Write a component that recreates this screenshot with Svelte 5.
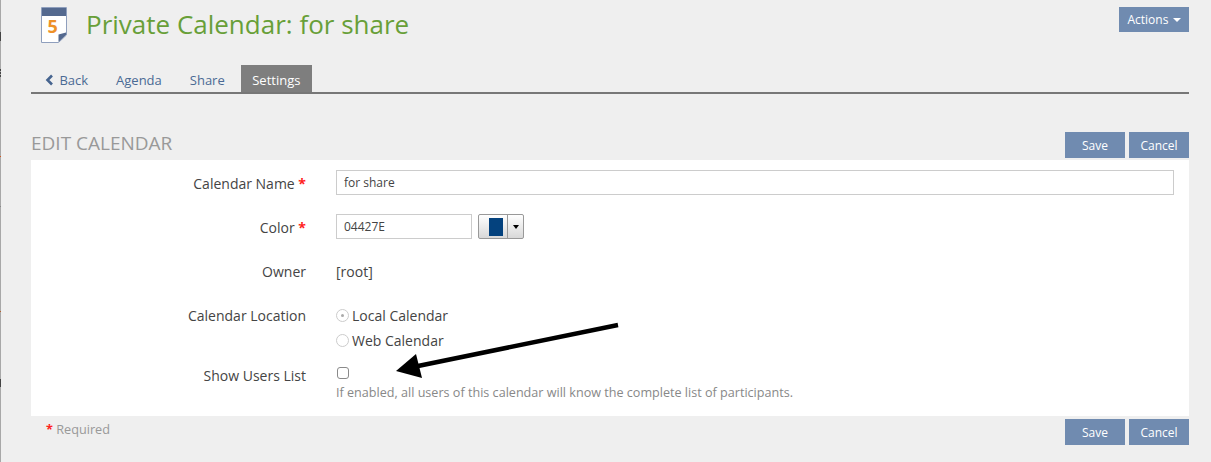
<script>
  const tabs = ['Agenda', 'Share'];
  const ticks = [
    { y: 32, h: 9, c: '#444' },
    { y: 69, h: 2, c: '#444' },
    { y: 72, h: 2, c: '#444' },
    { y: 75, h: 2, c: '#444' },
    { y: 156, h: 1, c: '#d2561c' },
    { y: 206, h: 1, c: '#888' },
    { y: 311, h: 1, c: '#b5622c' },
    { y: 379, h: 8, c: '#444' }
  ];
</script>

<div class="page">
  <span class="edge"></span>
  {#each ticks as t}
    <span class="tick" style="top:{t.y}px;height:{t.h}px;background:{t.c}"></span>
  {/each}
  <header class="head">
    <svg class="cal" width="26" height="36" viewBox="0 0 26 36" aria-hidden="true">
      <path d="M0.5 0.5H25.5V28L17.5 35.5H0.5Z" fill="#fff" stroke="#8f9fbd"/>
      <rect x="1" y="1" width="24" height="8" fill="#54698f"/>
      <path d="M25 25.5V28L17.5 35V27.5Z" fill="#54698f"/>
      <text x="6.5" y="26" class="five">5</text>
    </svg>
    <h1>Private Calendar: for share</h1>
    <button class="btn actions">Actions <i class="caret"></i></button>
  </header>

  <nav class="tabs">
    <a class="tab back" href="#back">
      <svg width="9" height="12" viewBox="0 0 9 12" aria-hidden="true"><path d="M7 1.5 2.5 6 7 10.5" fill="none" stroke="#46648f" stroke-width="2.6"/></svg>
      Back
    </a>
    {#each tabs as t}
      <a class="tab" href="#t">{t}</a>
    {/each}
    <a class="tab active" href="#s">Settings</a>
  </nav>

  <div class="section">
    <h2>EDIT CALENDAR</h2>
    <div class="btns"><button class="btn">Save</button><button class="btn">Cancel</button></div>
  </div>

  <form class="panel">
    <div class="row r-name">
      <span class="label">Calendar Name <b>*</b></span>
      <input class="text wide" value="for share" />
    </div>
    <div class="row r-color">
      <span class="label">Color <b>*</b></span>
      <input class="text short" value="04427E" />
      <div class="picker"><span class="well"><i></i></span><span class="drop"><i></i></span></div>
    </div>
    <div class="row r-owner">
      <span class="label">Owner</span>
      <span class="val">[root]</span>
    </div>
    <div class="row r-loc">
      <span class="label">Calendar Location</span>
      <div class="radios">
        <div class="radio"><span class="dot on"></span>Local Calendar</div>
        <div class="radio"><span class="dot"></span>Web Calendar</div>
      </div>
    </div>
    <div class="row r-show">
      <span class="label">Show Users List</span>
      <div class="showcol">
        <span class="check"></span>
        <p class="help">If enabled, all users of this calendar will know the complete list of participants.</p>
      </div>
    </div>
  </form>

  <footer class="foot">
    <span class="req"><b>*</b> Required</span>
    <div class="btns"><button class="btn">Save</button><button class="btn">Cancel</button></div>
  </footer>

  <svg class="arrow" width="240" height="60" viewBox="0 0 240 60" aria-hidden="true">
    <path d="M226 5 26 46" stroke="#000" stroke-width="4.5" fill="none"/>
    <path d="M4 51 24 34 30 58Z" fill="#000"/>
  </svg>
</div>

<style>
  :global(body) { margin: 0; background: #efefef; }
  .page {
    position: relative;
    width: 1211px;
    height: 462px;
    box-sizing: border-box;
    padding: 0 22px 0 31px;
    overflow: hidden;
    font-family: "Open Sans", sans-serif;
    font-size: 13px;
    color: #444;
    background: #efefef;
  }
  .edge { position: absolute; left: 0; top: 0; bottom: 0; width: 1px; background: #a8a8a8; }
  .tick { position: absolute; left: 0; width: 1px; }
  .head { display: flex; align-items: flex-start; height: 65px; padding-left: 10px; }
  .cal { margin-top: 7px; flex: none; }
  .five { font: 700 18px "Open Sans", sans-serif; fill: #ee9128; }
  h1 { margin: 6px 0 0 19px; flex: 1; font-size: 26px; line-height: 36px; font-weight: 400; color: #689f38; }
  .btn {
    width: 60px; height: 26px; padding: 0; border: 0;
    background: #708bb0; color: #fff;
    font: 12px "Open Sans", sans-serif;
  }
  .actions { width: 70px; height: 25px; margin-top: 7px; }
  .caret { display: inline-block; width: 0; height: 0; margin-left: 1px; vertical-align: 2px; border: 4px solid transparent; border-top-color: #fff; border-bottom: 0; }
  .tabs { display: flex; height: 27px; border-bottom: 2px solid #777; }
  .tab { display: block; padding: 0 14px; line-height: 30px; height: 27px; color: #4a6a94; text-decoration: none; white-space: nowrap; }
  .back svg { margin-right: 2px; vertical-align: -1px; }
  .active { background: #7e7e7e; color: #fff; padding: 0 12px 0 11.5px; margin-left: 2px; }
  .section { display: flex; justify-content: space-between; align-items: flex-start; margin-top: 38px; height: 28px; }
  h2 { margin: 0; font-size: 19px; line-height: 23px; font-weight: 400; color: #999; }
  .btns { display: flex; gap: 4px; }
  .panel { display: block; background: #fff; height: 256px; box-sizing: border-box; padding-top: 10px; }
  .row { display: flex; align-items: flex-start; box-sizing: border-box; }
  .label { width: 275px; flex: none; text-align: right; font-size: 14px; line-height: 18px; padding-top: 5px; }
  .label b { color: #f22; font-weight: 700; }
  .text {
    box-sizing: border-box; height: 25px; margin-left: 30px; padding: 0 7px;
    border: 1px solid #ccc; background: #fff; color: #444;
    font: 12px "Open Sans", sans-serif; outline: 0;
  }
  .wide { width: 838px; }
  .short { width: 136px; }
  .r-name { height: 44px; }
  .r-color { height: 44px; }
  .picker { display: flex; margin-left: 6px; width: 46px; height: 25px; box-sizing: border-box; border: 1px solid #999; border-radius: 2px; background: linear-gradient(#fff, #d8d8d8); }
  .well { width: 29px; box-sizing: border-box; display: flex; align-items: center; padding-left: 10px; border-right: 1px solid #999; }
  .well i { display: block; width: 14px; height: 18px; background: #04427e; }
  .drop { flex: 1; display: flex; align-items: center; justify-content: center; }
  .drop i { width: 0; height: 0; border: 3px solid transparent; border-top: 4px solid #000; border-bottom: 0; }
  .r-owner { height: 44px; }
  .val { margin-left: 30px; font-size: 14px; line-height: 18px; padding-top: 5px; }
  .r-loc { height: 61px; }
  .radios { margin-left: 30px; padding-top: 1px; }
  .radio { display: flex; align-items: center; height: 25px; font-size: 14px; line-height: 18px; }
  .dot { box-sizing: border-box; width: 13px; height: 13px; border: 1px solid #ccc; border-radius: 50%; margin-right: 3px; position: relative; background: #fff; }
  .dot.on::after { content: ""; position: absolute; left: 4px; top: 4px; width: 3px; height: 3px; border-radius: 50%; background: #aaa; }
  .r-show { height: 50px; }
  .r-show .label { padding-top: 4px; }
  .showcol { margin-left: 31px; }
  .check { display: block; box-sizing: border-box; width: 12px; height: 12px; border: 1px solid #8a8a8a; border-radius: 3px; background: #fff; margin-top: 4px; }
  .help { margin: 6px 0 0 -1px; font-size: 12.6px; line-height: 16px; color: #888; }
  .foot { display: flex; justify-content: space-between; align-items: flex-start; padding-top: 3px; }
  .req { padding: 2px 0 0 15px; font-size: 12.7px; line-height: 16px; color: #999; }
  .req b { color: #f22; }
  .arrow { position: absolute; left: 392px; top: 320px; pointer-events: none; }
</style>
